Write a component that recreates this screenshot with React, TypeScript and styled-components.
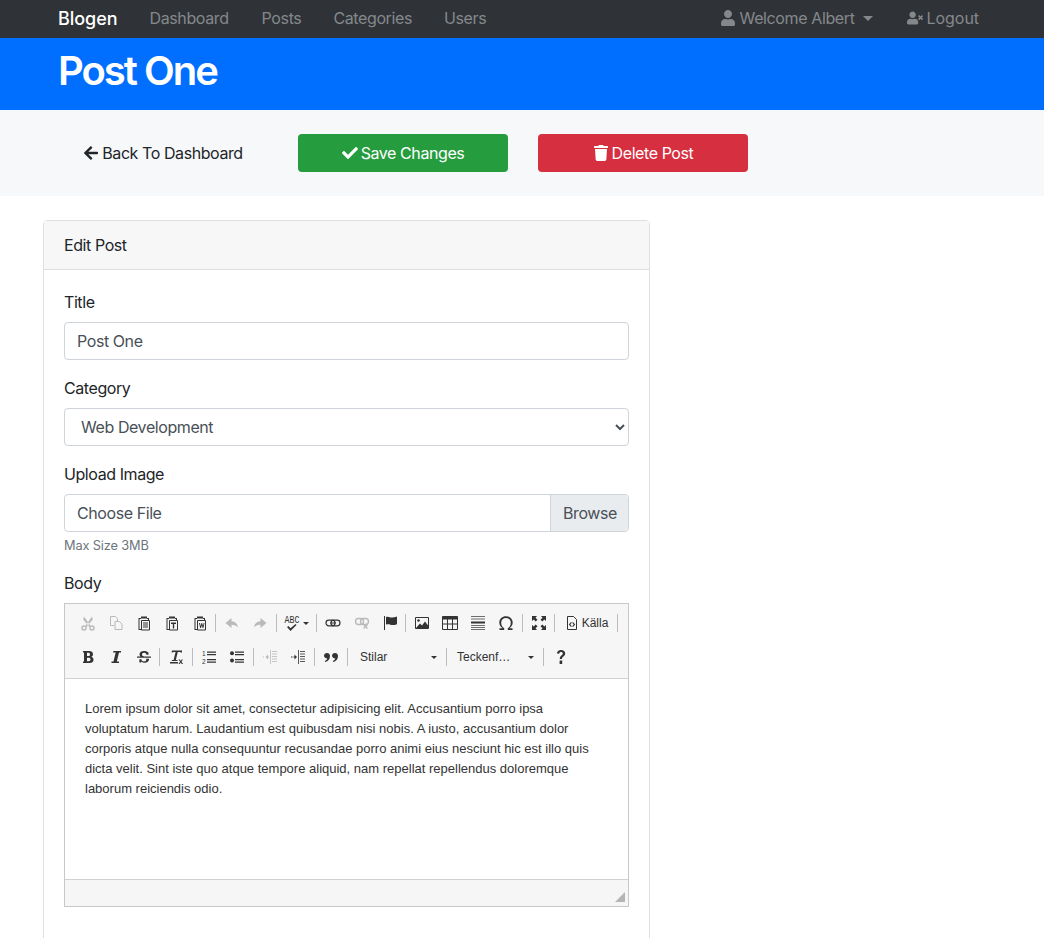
import { ReactNode } from "react";
import styled, { createGlobalStyle } from "styled-components";
import { FaArrowLeft, FaCheck, FaTrash, FaUser, FaUserTimes } from "react-icons/fa";

const GlobalStyle = createGlobalStyle`
	html, body {
		margin: 0;
		height: 938px;
		overflow: hidden;
		background: #fff;
	}
	* {
		box-sizing: border-box;
	}
	body {
		font-family: Inter, "Liberation Sans", sans-serif;
		font-size: 16px;
		letter-spacing: -0.42px;
		color: #212529;
		line-height: 1.5;
	}
`;

const Page = styled.div`
	height: 938px;
	overflow: hidden;
`;

const Nav = styled.nav`
	height: 38px;
	background: #2f3338;
	display: flex;
	align-items: center;
	justify-content: space-between;
	padding: 0 65px 2px 58px;
`;

const NavGroup = styled.div`
	display: flex;
	align-items: center;
`;

const Brand = styled.span`
	color: #fff;
	font-size: 18px;
	font-weight: 500;
	margin-right: 32px;
	letter-spacing: -0.05px;
`;

const NavLink = styled.span<{ $gap?: number; $tight?: boolean }>`
	color: #85888b;
	margin-right: ${(p) => p.$gap ?? 32}px;
	letter-spacing: ${(p) => (p.$tight === false ? "-0.05px" : "-0.38px")};
	display: flex;
	align-items: center;
	gap: 4px;
`;

const Caret = styled.span`
	width: 0;
	height: 0;
	margin-left: 4px;
	border-top: 5px solid #85888b;
	border-left: 5px solid transparent;
	border-right: 5px solid transparent;
`;

const Hero = styled.header`
	height: 72px;
	background: #006fff;
	padding: 9px 58px 0;
`;

const Title = styled.h1`
	margin: 0;
	color: #fff;
	font-size: 40px;
	font-weight: 600;
	line-height: 48px;
	letter-spacing: -2px;
`;

const Actions = styled.section`
	height: 86px;
	background: #f7f8fa;
	padding: 24px 58px;
	display: grid;
	grid-template-columns: repeat(3, 210px);
	column-gap: 30px;
`;

const ActionButton = styled.button<{ $bg?: string }>`
	height: 38px;
	border: none;
	border-radius: 4px;
	background: ${(p) => p.$bg ?? "transparent"};
	color: ${(p) => (p.$bg ? "#fff" : "#212529")};
	font: inherit;
	letter-spacing: inherit;
	display: flex;
	align-items: center;
	justify-content: center;
	gap: 3px;
	padding: 0;
`;

const Card = styled.div`
	width: 607px;
	margin: 24px 0 0 43px;
	border: 1px solid #dfdfdf;
	border-radius: 4px;
`;

const CardHeader = styled.div`
	height: 49px;
	padding: 12px 20px;
	background: #f7f7f7;
	border-bottom: 1px solid #dfdfdf;
`;

const CardBody = styled.div`
	padding: 20px 20px 60px;
`;

const Field = styled.div`
	margin-bottom: 16px;
`;

const Label = styled.label`
	display: block;
	height: 24px;
	margin-bottom: 8px;
`;

const TextInput = styled.input`
	display: block;
	width: 100%;
	height: 38px;
	padding: 6px 12px;
	border: 1px solid #ced4da;
	border-radius: 4px;
	font: inherit;
	letter-spacing: inherit;
	color: #495057;
	background: #fff;
`;

const Select = styled.select`
	display: block;
	width: 100%;
	height: 38px;
	padding: 6px 12px;
	border: 1px solid #ced4da;
	border-radius: 4px;
	font: inherit;
	letter-spacing: inherit;
	color: #495057;
	background: #fff;
`;

const FileBox = styled.div`
	height: 38px;
	display: flex;
	border: 1px solid #ced4da;
	border-radius: 4px;
	color: #495057;
	overflow: hidden;
`;

const FileName = styled.div`
	flex: 1;
	padding: 6px 12px;
`;

const Browse = styled.div`
	width: 78px;
	padding: 6px 12px;
	background: #e9ecef;
	border-left: 1px solid #ced4da;
`;

const Hint = styled.small`
	display: block;
	margin-top: 4px;
	font-size: 12.8px;
	line-height: 19px;
	letter-spacing: -0.15px;
	color: #6c757d;
`;

const Editor = styled.div`
	border: 1px solid #c8c8c8;
	font-family: "Liberation Sans", Arial, sans-serif;
	letter-spacing: normal;
`;

const Toolbar = styled.div`
	height: 75px;
	padding: 2px 0 0 9px;
	background: #f6f6f6;
	border-bottom: 1px solid #d1d1d1;
`;

const ToolRow = styled.div`
	height: 34px;
	display: flex;
	align-items: center;
`;

const Tool = styled.span<{ $off?: boolean; $width?: number }>`
	width: ${(p) => p.$width ?? 28}px;
	height: 28px;
	display: flex;
	align-items: center;
	justify-content: center;
	flex: none;
	color: #333;
	opacity: ${(p) => (p.$off ? 0.3 : 1)};

	svg {
		display: block;
		overflow: visible;
	}
`;

const Sep = styled.span<{ $left?: number; $right?: number }>`
	width: 1px;
	height: 18px;
	flex: none;
	background: #bcbcbc;
	margin: 0 ${(p) => p.$right ?? 2}px 0 ${(p) => p.$left ?? 1}px;
`;

const ToolArrow = styled.span`
	width: 0;
	height: 0;
	flex: none;
	margin-left: 3px;
	border-top: 3px solid #333;
	border-left: 3px solid transparent;
	border-right: 3px solid transparent;
`;

const ToolText = styled.span`
	font-size: 12px;
	line-height: 16px;
	color: #333;
	margin-left: 2px;
`;

const Combo = styled.span<{ $width: number }>`
	width: ${(p) => p.$width}px;
	flex: none;
	display: flex;
	align-items: center;
	justify-content: space-between;
	padding: 0 9px 0 10px;
	font-size: 12px;
	color: #333;
`;

const Content = styled.div`
	height: 200px;
	padding: 20px 33px 20px 20px;
	font-size: 13px;
	line-height: 20px;
	color: #333;
`;

const EditorFooter = styled.div`
	height: 27px;
	background: #f6f6f6;
	border-top: 1px solid #d1d1d1;
	display: flex;
	justify-content: flex-end;
	align-items: flex-end;
	padding: 0 3px 4px 0;
`;

const Icon = ({ children }: { children: ReactNode }) => (
	<svg width="16" height="16" viewBox="0 0 16 16" fill="currentColor">
		{children}
	</svg>
);

const Clipboard = ({ children }: { children: ReactNode }) => (
	<Icon>
		<path d="M5 1.500h6v2H5zM2.500 3H5v1H3.500v10H5v1H2.500zM11 3h2v2h-1V4h-1z" />
		<path d="M5.500 5.500h8V15h-8z" fill="none" stroke="currentColor" />
		{children}
	</Icon>
);

const ListLines = () => (
	<path d="M6 2.500h9v1.200H6zM6 5h9v1.200H6zM6 10h9v1.200H6zM6 12.500h9v1.200H6z" />
);

const IndentLines = () => (
	<path d="M8 1h1v14H8zM10 2h5v1h-5zM10 4.500h5v1h-5zM10 7h5v1h-5zM10 9.500h5v1h-5zM10 12h5v1h-5z" opacity="0.8" />
);

const App = () => {
	return (
		<Page>
			<GlobalStyle />
			<Nav>
				<NavGroup>
					<Brand>Blogen</Brand>
					<NavLink $gap={33}>Dashboard</NavLink>
					<NavLink>Posts</NavLink>
					<NavLink>Categories</NavLink>
					<NavLink>Users</NavLink>
				</NavGroup>
				<NavGroup>
					<NavLink $gap={34}>
						<FaUser size={16} /> Welcome Albert <Caret />
					</NavLink>
					<NavLink $gap={0} $tight={false}>
						<FaUserTimes size={16} /> Logout
					</NavLink>
				</NavGroup>
			</Nav>
			<Hero>
				<Title>Post One</Title>
			</Hero>
			<Actions>
				<ActionButton>
					<FaArrowLeft size={16} /> Back To Dashboard
				</ActionButton>
				<ActionButton $bg="#259c3e">
					<FaCheck size={16} /> Save Changes
				</ActionButton>
				<ActionButton $bg="#d62f40">
					<FaTrash size={16} /> Delete Post
				</ActionButton>
			</Actions>
			<Card>
				<CardHeader>Edit Post</CardHeader>
				<CardBody>
					<Field>
						<Label>Title</Label>
						<TextInput defaultValue="Post One" />
					</Field>
					<Field>
						<Label>Category</Label>
						<Select defaultValue="Web Development">
							<option>Web Development</option>
						</Select>
					</Field>
					<Field>
						<Label>Upload Image</Label>
						<FileBox>
							<FileName>Choose File</FileName>
							<Browse>Browse</Browse>
						</FileBox>
						<Hint>Max Size 3MB</Hint>
					</Field>
					<Field>
						<Label>Body</Label>
						<Editor>
							<Toolbar>
								<ToolRow>
									<Tool $off>
										<Icon>
											<circle cx="4" cy="13" r="2" fill="none" stroke="currentColor" strokeWidth="1.400" />
											<circle cx="12" cy="13" r="2" fill="none" stroke="currentColor" strokeWidth="1.400" />
											<path d="M5 11.500 12 1.500l.8 3L6.500 12zM11 11.500 4 1.500l-.8 3L9.500 12z" />
										</Icon>
									</Tool>
									<Tool $off>
										<Icon>
											<path d="M2.500 1.500h5l2 2v3M2.500 1.500v9H6M7 6.500h4.500l2.500 2.500v5.500H7z" fill="none" stroke="currentColor" />
										</Icon>
									</Tool>
									<Tool>
										<Clipboard>
											<path d="M7 7.500h5v1H7zM7 9.500h5v1H7zM7 11.500h5v1H7z" />
										</Clipboard>
									</Tool>
									<Tool>
										<Clipboard>
											<path d="M7 7.500h5v1.600h-1.800v4.400H8.800V9.100H7z" />
										</Clipboard>
									</Tool>
									<Tool>
										<Clipboard>
											<path d="M7 8h1l.6 3 .9-3h.6l.9 3 .6-3h.9l-1.100 5h-.8l-.8-2.800-.8 2.800h-.8z" />
										</Clipboard>
									</Tool>
									<Sep />
									<Tool $off>
										<Icon>
											<path d="M7.500 3 1.500 8l6 5V9.800c3 0 5 .8 6.500 2.700C13.600 9 11.500 6.500 7.500 6.200z" />
										</Icon>
									</Tool>
									<Tool $off>
										<Icon>
											<path d="M8.500 3l6 5-6 5V9.800c-3 0-5 .8-6.500 2.700C2.400 9 4.500 6.500 8.500 6.200z" />
										</Icon>
									</Tool>
									<Sep $left={2} />
									<Tool $width={34}>
										<Icon>
											<text x="0.500" y="8" fontFamily="Liberation Mono, monospace" fontSize="10" textLength="15" lengthAdjust="spacingAndGlyphs" fill="currentColor">
												ABC
											</text>
											<path d="M3 12l1.500-1 2 2.200 5-4.200 1 1-6 6z" />
										</Icon>
										<ToolArrow />
									</Tool>
									<Sep $left={3} />
									<Tool>
										<Icon>
											<rect x="1" y="5.200" width="9" height="5.600" rx="2.800" fill="none" stroke="currentColor" strokeWidth="1.200" />
											<rect x="6" y="5.200" width="9" height="5.600" rx="2.800" fill="none" stroke="currentColor" strokeWidth="1.200" />
											<path d="M5 7.500h6v1H5z" />
										</Icon>
									</Tool>
									<Tool $off $width={29}>
										<Icon>
											<rect x="1.500" y="3.500" width="8" height="6" rx="3" fill="none" stroke="currentColor" strokeWidth="1.400" />
											<rect x="6.500" y="3.500" width="8" height="6" rx="3" fill="none" stroke="currentColor" strokeWidth="1.400" />
											<path d="m9 10 1-1 1.500 1.500L13 9l1 1-1.500 1.500L14 13l-1 1-1.500-1.500L10 14l-1-1 1.500-1.500z" />
										</Icon>
									</Tool>
									<Tool>
										<Icon>
											<path d="M2 1h1v14H2zM4 2c3-1 4 1 6.500 .5S14 2 15 1.500V9c-1 .8-2.500 1.200-4.500 1S7 8.500 4 9.500z" />
										</Icon>
									</Tool>
									<Sep />
									<Tool>
										<Icon>
											<path d="M1.500 2.500h13v11h-13z" fill="none" stroke="currentColor" />
											<circle cx="4.500" cy="5.500" r="1.300" />
											<path d="M2 13l4-4.500 2 2 3-4 3.500 4.500V13z" />
										</Icon>
									</Tool>
									<Tool>
										<Icon>
											<path d="M.500 1.500h15v3H.500z" />
											<path d="M.500 1.500h15v13H.500zM.500 9h15M5.500 4v10.500M10.500 4v10.500" fill="none" stroke="currentColor" />
										</Icon>
									</Tool>
									<Tool>
										<Icon>
											<path d="M1 1h14v1H1zM1 3.500h14v1H1zM1 10h14v1H1zM1 12h14v1H1zM1 14h14v1H1z" opacity="0.7" />
											<path d="M1 6.500h14v2H1z" />
										</Icon>
									</Tool>
									<Tool>
										<Icon>
											<path d="M1.500 15v-1.800h3C2.600 11.800 1.300 10 1.300 7.600 1.300 3.800 4.200 1.200 8 1.200s6.700 2.600 6.700 6.400c0 2.400-1.300 4.200-3.200 5.600h3V15H9.800v-1.700c1.800-1.200 3-3 3-5.600 0-2.800-2-4.800-4.800-4.800s-4.800 2-4.800 4.800c0 2.600 1.200 4.400 3 5.600V15z" />
										</Icon>
									</Tool>
									<Sep $left={2} />
									<Tool>
										<Icon>
											<path d="M1 1h5L4.500 2.700 6.500 4.700 4.700 6.500 2.700 4.500 1 6zM15 1v5l-1.700-1.500-2 2-1.800-1.800 2-2L10 1zM1 15v-5l1.700 1.500 2-2 1.800 1.800-2 2L6 15zM15 15h-5l1.500-1.700-2-2 1.800-1.800 2 2L15 10z" />
										</Icon>
									</Tool>
									<Sep />
									<Tool $width={58}>
										<Icon>
											<path d="M3.500 1.500h6l3 3v10h-9z" fill="none" stroke="currentColor" />
											<path d="M7 7 4.800 9.500 7 12l.8-.7-1.500-1.800 1.500-1.800zM9 7l2.200 2.500L9 12l-.8-.7 1.500-1.800-1.500-1.800z" />
										</Icon>
										<ToolText>Källa</ToolText>
									</Tool>
									<Sep $left={2} />
								</ToolRow>
								<ToolRow>
									<Tool>
										<Icon>
											<path d="M3 2h6c2.500 0 4 1.200 4 3.200 0 1.300-.7 2.200-1.800 2.600 1.500.4 2.300 1.500 2.300 3 0 2.200-1.600 3.200-4 3.200H3v-1.500h1V3.500H3zM7 3.800V7h1.400c1 0 1.600-.6 1.600-1.600S9.400 3.800 8.400 3.800zM7 8.800v3.400h1.700c1.100 0 1.800-.6 1.800-1.700s-.7-1.700-1.800-1.700z" />
										</Icon>
									</Tool>
									<Tool>
										<Icon>
											<path d="M5.500 2H13v1.500h-2l-2.200 9H11V14H3.500v-1.500h2l2.200-9H5z" />
										</Icon>
									</Tool>
									<Tool>
										<Icon>
											<path d="M12.500 3.800C11.500 2.500 10 2 8 2 5.500 2 3.500 3.200 3.500 5.300c0 1 .4 1.700 1 2.200H1v1.300h14V7.500H8c-1.500-.4-2-.9-2-1.900C6 4.500 6.800 3.800 8 3.800c1.300 0 2.100.6 2.500 2h2zM10 9.800c.2.300.3.600.3 1 0 1-.9 1.600-2.200 1.600-1.500 0-2.400-.7-2.700-2.200h-2v3.200h1.800l.3-.9c1 .8 1.900 1.300 3.200 1.300 2.400 0 4.300-1.200 4.300-3.200 0-.3 0-.6-.1-.8z" />
										</Icon>
									</Tool>
									<Sep />
									<Tool>
										<Icon>
											<path d="M4 1.500h10V3.500h-1.200L12 2.900H9.800L7.800 11H9.500v1H3.800v-1h1.800l2-8.100H5.500l-.8.600H3.600zM2 13h8v1.500H2zM10.500 10.500h1.300l1 1.500 1-1.500H15l-1.500 2.200 1.600 2.300h-1.300l-1-1.500-1 1.500h-1.300l1.600-2.300z" />
										</Icon>
									</Tool>
									<Sep $left={2} />
									<Tool>
										<Icon>
											<ListLines />
											<text x="1" y="7" fontFamily="Liberation Sans, sans-serif" fontSize="6.500" fill="currentColor">
												1
											</text>
											<text x="1" y="14.500" fontFamily="Liberation Sans, sans-serif" fontSize="6.500" fill="currentColor">
												2
											</text>
										</Icon>
									</Tool>
									<Tool>
										<Icon>
											<circle cx="3" cy="4.200" r="2" />
											<circle cx="3" cy="11.500" r="2" />
											<ListLines />
										</Icon>
									</Tool>
									<Sep $left={2} />
									<Tool $off>
										<Icon>
											<IndentLines />
											<path d="M6 5.500 3.500 8 6 10.500v-2h1v-1H6zM1 7.500h1v1H1z" />
										</Icon>
									</Tool>
									<Tool>
										<Icon>
											<IndentLines />
											<path d="M4.500 5.500 7 8l-2.500 2.500v-2h-1v-1h1zM1 7.500h1.500v1H1z" />
										</Icon>
									</Tool>
									<Sep $left={2} />
									<Tool>
										<Icon>
											<path d="M4 4c1.700 0 3 1.200 3 3 0 3-2 5.500-4.800 6l-.4-1c1.300-.5 2.200-1.300 2.500-2.400C2.700 9.500 1 8.400 1 6.800 1 5.200 2.300 4 4 4zM12 4c1.700 0 3 1.200 3 3 0 3-2 5.500-4.800 6l-.4-1c1.300-.5 2.200-1.300 2.500-2.400-1.600-.1-3.300-1.200-3.300-2.800C9 5.200 10.300 4 12 4z" />
										</Icon>
									</Tool>
									<Sep $left={2} />
									<Combo $width={96}>
										Stilar
										<ToolArrow />
									</Combo>
									<Sep $left={0} $right={0} />
									<Combo $width={96}>
										Teckenf…
										<ToolArrow />
									</Combo>
									<Sep $left={0} $right={3} />
									<Tool>
										<Icon>
											<path d="M4 4.500C4 2.300 5.700 1 8 1c2.500 0 4.200 1.400 4.200 3.500 0 1.500-.8 2.400-2 3.200-1 .7-1.200 1.100-1.200 2.300H6.800c0-1.800.4-2.600 1.600-3.500.9-.6 1.400-1.100 1.400-2 0-.9-.7-1.500-1.800-1.500S6.300 3.600 6.200 4.700zM6.600 11.600h2.600V15H6.600z" />
										</Icon>
									</Tool>
								</ToolRow>
							</Toolbar>
							<Content>
								Lorem ipsum dolor sit amet, consectetur adipisicing elit. Accusantium porro ipsa voluptatum harum. Laudantium est quibusdam nisi nobis. A iusto, accusantium dolor corporis atque nulla consequuntur recusandae porro animi eius nesciunt hic est illo quis dicta velit. Sint iste quo atque tempore aliquid, nam repellat repellendus doloremque laborum reiciendis odio.
							</Content>
							<EditorFooter>
								<svg width="10" height="10" viewBox="0 0 10 10">
									<path d="M10 0v10H0z" fill="#b5b5b5" />
								</svg>
							</EditorFooter>
						</Editor>
					</Field>
				</CardBody>
			</Card>
		</Page>
	);
};

export default App;
